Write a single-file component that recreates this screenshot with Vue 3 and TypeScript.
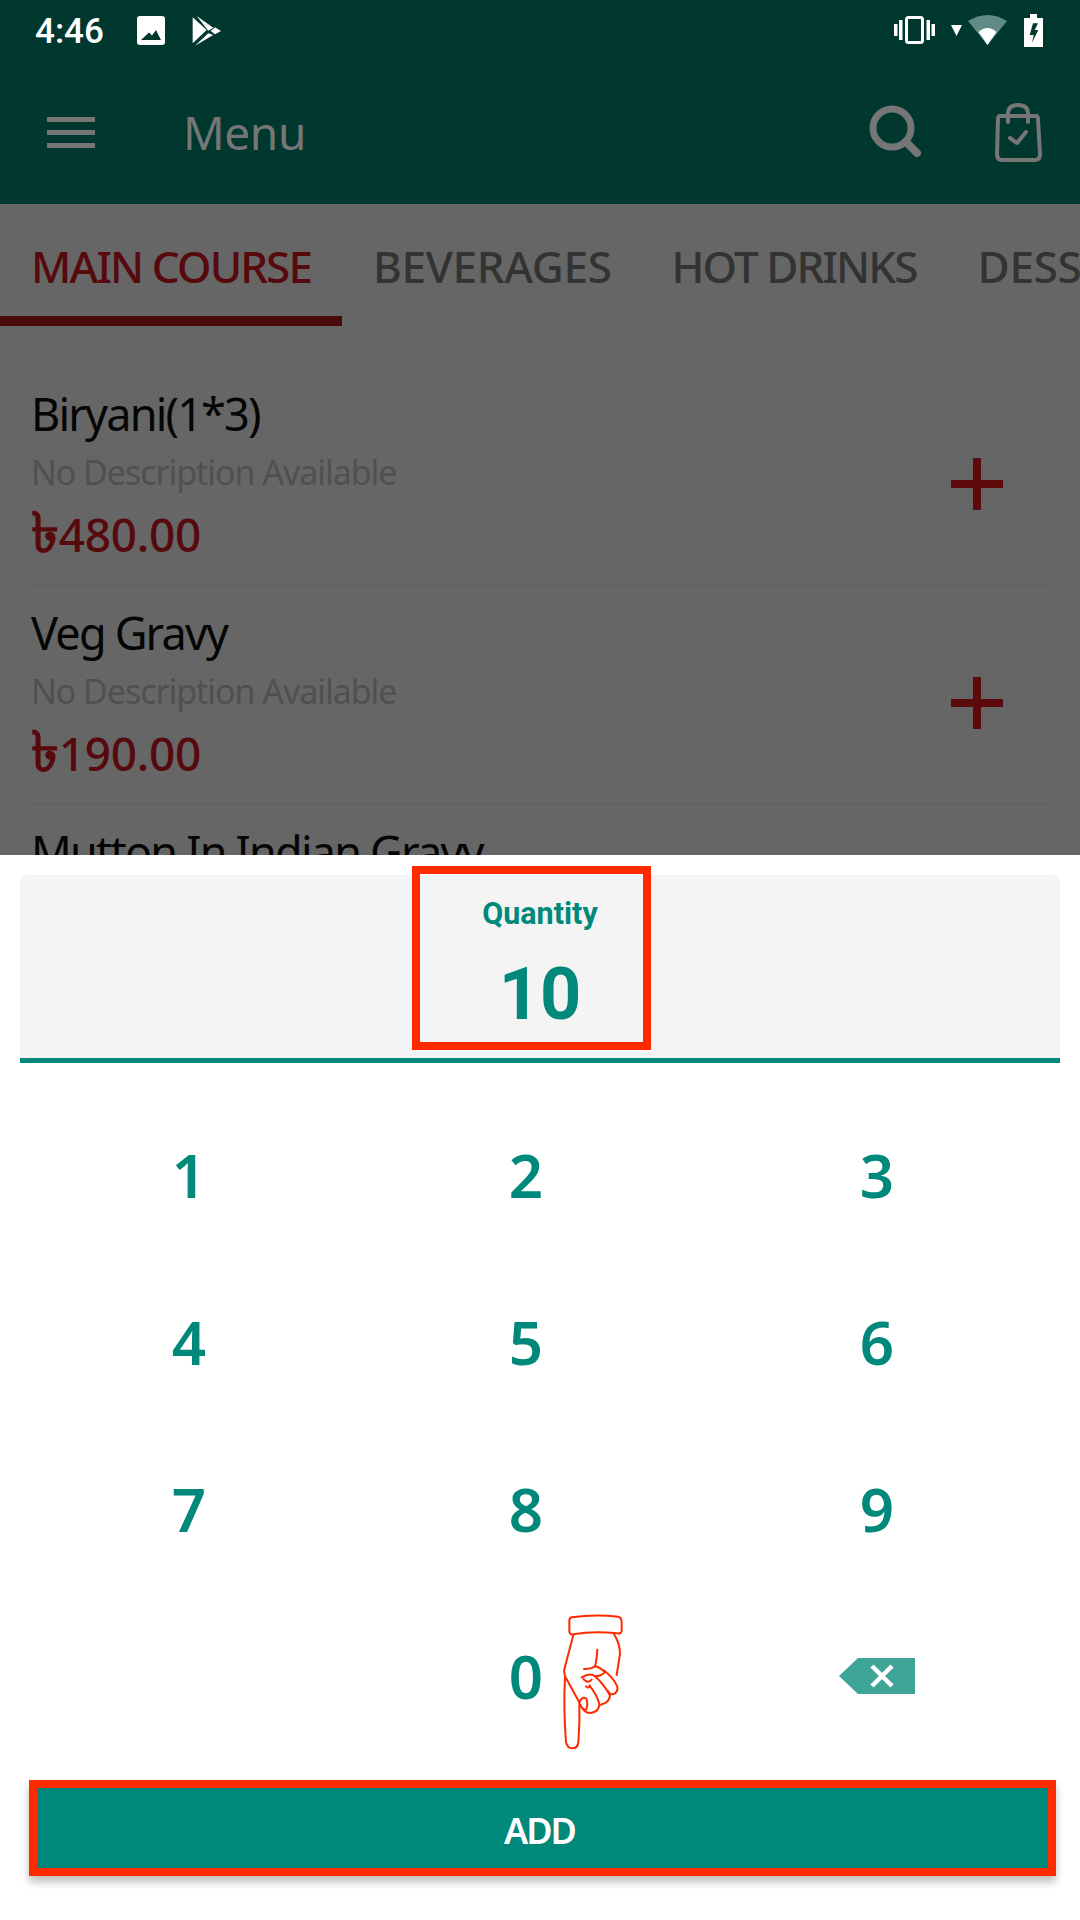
<template>
  <div class="screen">
    <div class="backdrop">
      <header class="appbar">
        <div class="status">
          <span class="time">4:46</span>
          <svg class="st-image" width="28" height="29" viewBox="0 0 28 29">
            <rect width="28" height="29" rx="3" fill="#fff" />
            <path d="M4 24 L12 16.5 L15 19.5 L19 14 L24 24Z" fill="#00382f" />
          </svg>
          <svg class="st-play" width="29" height="31" viewBox="0 0 29 31" fill="#fff">
            <polygon points="0.7,2.3 14.7,15 0.7,28.3" />
            <polygon points="4.7,1 21.3,12.7 16.3,15.7" />
            <polygon points="23,12.3 29,16 23,19.3 18.7,16" />
            <polygon points="3,30.7 16.3,18.3 21.3,20" />
          </svg>
          <span class="grow"></span>
          <svg width="41" height="28" viewBox="0 0 41 28" fill="#fff">
            <rect x="0" y="8" width="3.5" height="12" />
            <rect x="5" y="4" width="3.5" height="20" />
            <rect x="12.5" y="1.5" width="16" height="25" rx="2" fill="none" stroke="#fff" stroke-width="3" />
            <rect x="32.5" y="4" width="3.5" height="20" />
            <rect x="37.5" y="8" width="3.5" height="12" />
          </svg>
          <svg class="st-tri" width="11" height="11" viewBox="0 0 11 11"><polygon points="0,0 11,0 5.5,11" fill="#fff" /></svg>
          <svg class="st-wifi" width="39" height="30" viewBox="0 0 39 30">
            <path d="M0 6 Q19.5 -6 39 6 L19.5 30Z" fill="#5f8a85" />
            <path d="M10.5 17 Q19.5 9 28.5 17 L19.5 30Z" fill="#fff" />
          </svg>
          <svg class="st-batt" width="19" height="33" viewBox="0 0 19 33">
            <path d="M6 0 H13 V4 H19 V33 H0 V4 H6Z" fill="#fff" />
            <polygon points="9,9.3 5.7,21 9.7,21 8,28.7 14.3,16 10.7,16 14,9.3" fill="#00382f" />
          </svg>
        </div>
        <div class="toolbar">
          <div class="burger"><i></i><i></i><i></i></div>
          <span class="title">Menu</span>
          <span class="grow"></span>
          <svg width="64" height="64" viewBox="0 0 64 64" fill="none" stroke="#767676">
            <circle cx="32" cy="32" r="19" stroke-width="7" />
            <line x1="46" y1="46" x2="57" y2="57" stroke-width="8" stroke-linecap="round" />
          </svg>
          <svg class="bag" width="56" height="64" viewBox="0 0 56 64" fill="none" stroke="#767676" stroke-width="4" stroke-linecap="round" stroke-linejoin="round">
            <path d="M10 16 H46 Q48 16 48 19 L50 54 Q50 60 45 60 H12 Q7 60 7 54 L8 19 Q8 16 10 16Z" />
            <path d="M18 22 V14 Q18 5 28 5 Q38 5 38 14 V22" />
            <path d="M20 38 L27 43 L36 32" />
          </svg>
        </div>
      </header>

      <nav class="tabs">
        <span v-for="(tab, i) in tabs" :key="tab" class="tab" :class="{ active: i === 0 }">{{ tab }}</span>
      </nav>

      <div class="list">
        <div v-for="item in items" :key="item.name" class="row">
          <div class="info">
            <div class="name">{{ item.name }}</div>
            <div class="desc">No Description Available</div>
            <div class="price"><span class="taka">৳</span>{{ item.price }}</div>
          </div>
          <span class="plus"></span>
        </div>
      </div>
    </div>

    <div class="sheet">
      <div class="field">
        <div class="label">Quantity</div>
        <div class="qty">10</div>
        <div class="mark"></div>
      </div>

      <div class="keypad">
        <div v-for="key in keys" :key="key" class="key">{{ key }}</div>
        <div class="key">
          <svg width="76" height="36" viewBox="0 0 76 36">
            <polygon points="19,0 76,0 76,36 19,36 0,18" fill="#3fa597" />
            <path d="M33 8 L53 28 M53 8 L33 28" stroke="#fff" stroke-width="4.5" />
          </svg>
        </div>
        <svg class="hand" width="180" height="180" viewBox="0 0 540 540" fill="none" stroke="#ff2a00" stroke-width="6" stroke-linecap="round" stroke-linejoin="round">
          <path d="M275 85 Q345 75 415 83 Q425 85 425 100 V125 Q425 135 410 133 Q340 125 280 136 Q268 138 268 125 V95 Q268 87 275 85Z" />
          <path d="M280 138 Q265 195 252 245 L255 262 Q250 360 258 460 Q262 478 277 478 Q293 478 295 460 Q300 400 298 340 L255 262" />
          <path d="M402 135 Q420 165 420 195 L410 258" />
          <path d="M370 243 Q400 265 412 292 Q415 312 398 316 Q388 316 383 305" />
          <path d="M345 262 Q375 290 390 320 Q388 342 362 347" />
          <path d="M328 290 Q350 315 358 345 Q358 368 332 372 Q315 372 308 358" />
          <path d="M298 340 Q305 322 318 328 Q326 345 318 362 Q305 362 302 348" />
          <path d="M352 182 Q350 215 345 232 Q330 242 312 240" />
          <path d="M345 232 Q360 235 375 250 Q362 262 345 262 Q330 250 305 265" />
          <path d="M310 270 Q325 285 335 272 M318 292 Q325 300 330 290" />
        </svg>
      </div>

      <button class="add" type="button">ADD</button>
    </div>
  </div>
</template>

<script setup lang="ts">
interface MenuItem {
  name: string
  price: string
}

const tabs: string[] = ['MAIN COURSE', 'BEVERAGES', 'HOT DRINKS', 'DESSERTS']

const items: MenuItem[] = [
  { name: 'Biryani(1*3)', price: '480.00' },
  { name: 'Veg Gravy', price: '190.00' },
  { name: 'Mutton In Indian Gravy', price: '320.00' },
]

const keys: string[] = ['1', '2', '3', '4', '5', '6', '7', '8', '9', '', '0']
</script>

<style>
html,
body {
  margin: 0;
  background: #fff;
}
</style>

<style scoped>
.screen {
  width: 1080px;
  height: 1920px;
  display: flex;
  flex-direction: column;
  overflow: hidden;
  font-family: "Noto Sans", "Noto Sans CJK SC", sans-serif;
}

.backdrop {
  height: 855px;
  overflow: hidden;
  background: #666;
}

.grow {
  flex: 1;
}

.appbar {
  height: 204px;
  background: #00382f;
}

.status {
  height: 60px;
  display: flex;
  align-items: center;
  padding: 0 37px 0 35px;
}

.time {
  width: 69px;
  margin-top: 2px;
  color: #fff;
  font: 500 35px Roboto, sans-serif;
}

.st-image {
  margin-left: 33px;
}

.st-play {
  margin-left: 27px;
}

.st-tri {
  margin-left: 16px;
}

.st-wifi {
  margin-left: 6px;
}

.st-batt {
  margin-left: 17px;
}

.toolbar {
  height: 136px;
  display: flex;
  align-items: center;
  padding: 0 34px 0 47px;
}

.burger {
  width: 48px;
  margin-top: 8px;
  display: flex;
  flex-direction: column;
  gap: 8px;
}

.burger i {
  display: block;
  height: 5px;
  background: #767676;
}

.title {
  margin: 8px 0 0 88px;
  color: #767676;
  font-size: 46px;
  letter-spacing: -0.4px;
  line-height: 60px;
}

.bag {
  margin: 8px 0 0 66px;
}

.tabs {
  height: 122px;
  display: flex;
  white-space: nowrap;
  overflow: hidden;
}

.tab {
  flex-shrink: 0;
  padding: 32px 30px 0 31px;
  color: #333;
  font-size: 44px;
  font-weight: 500;
  letter-spacing: -0.3px;
  line-height: 60px;
}

.tab:nth-child(2) {
  padding-right: 29px;
}

.tab:nth-child(3) {
  letter-spacing: -1.9px;
}

.tab.active {
  width: 342px;
  height: 122px;
  box-sizing: border-box;
  padding-right: 0;
  color: #560a0d;
  letter-spacing: -1.9px;
  border-bottom: 10px solid #4a0a0c;
}

.list {
  margin: 41px 32px 0 31px;
}

.row {
  height: 219px;
  box-sizing: border-box;
  display: flex;
  align-items: center;
  border-bottom: 1px solid #5c5c5c;
}

.info {
  flex: 1;
  align-self: flex-start;
  padding-top: 17px;
}

.name {
  color: #050505;
  font-size: 45px;
  letter-spacing: -1.8px;
  line-height: 60px;
}

.desc {
  margin-top: 6px;
  color: #505050;
  font-size: 34px;
  letter-spacing: -1.05px;
  line-height: 44px;
}

.price {
  margin-top: 10px;
  color: #560a0d;
  font-size: 46px;
  font-weight: 500;
  letter-spacing: -0.3px;
  line-height: 60px;
}

.taka {
  font-size: 56px;
  font-weight: 700;
  line-height: 40px;
}

.plus {
  width: 52px;
  height: 52px;
  margin: 16px 45px 0 0;
  background:
    linear-gradient(#5c0a0c, #5c0a0c) center / 100% 8px no-repeat,
    linear-gradient(#5c0a0c, #5c0a0c) center / 8px 100% no-repeat;
}

.sheet {
  flex: 1;
  display: flex;
  flex-direction: column;
  background: #fff;
}

.field {
  position: relative;
  height: 183px;
  margin: 20px 20px 0;
  text-align: center;
  background: #f4f4f4;
  border-bottom: 5px solid #00897b;
  border-radius: 8px 8px 0 0;
  color: #00897b;
  font-family: Roboto, sans-serif;
  font-weight: 700;
}

.label {
  padding-top: 21px;
  font-size: 30.5px;
  line-height: 36px;
}

.qty {
  margin-top: 23px;
  font-size: 72px;
  line-height: 80px;
}

.mark {
  position: absolute;
  left: 392px;
  top: -9px;
  width: 239px;
  height: 184px;
  box-sizing: border-box;
  border: 8px solid #ff2a00;
}

.keypad {
  position: relative;
  height: 668px;
  margin-top: 28px;
  display: grid;
  grid-template-columns: 378px 296px 406px;
  grid-auto-rows: 167px;
}

.key {
  display: flex;
  align-items: center;
  justify-content: center;
  color: #00897b;
  font-size: 60px;
  font-weight: 600;
}

.hand {
  position: absolute;
  left: 480px;
  top: 498px;
}

.add {
  height: 96px;
  margin: 21px 24px 0 29px;
  padding: 4px 6px 0 0;
  background: #00897b;
  border: 8px solid #ff2a00;
  box-shadow: 0 6px 8px rgba(0, 0, 0, 0.25);
  color: #fff;
  font-family: "Noto Sans", sans-serif;
  font-size: 36px;
  font-weight: 600;
  letter-spacing: -2px;
}
</style>
